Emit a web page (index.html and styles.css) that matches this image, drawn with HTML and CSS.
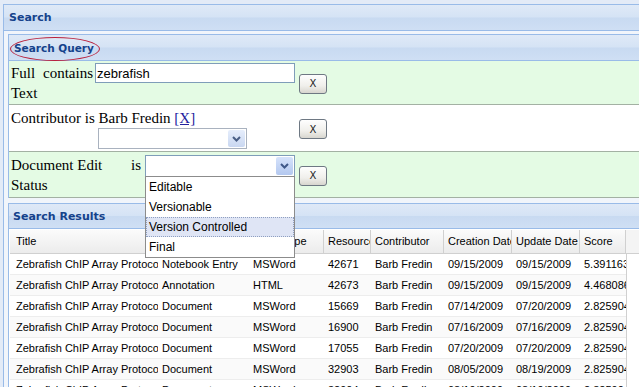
FILE: index.html
```html
<!DOCTYPE html>
<html>

<head>
    <meta charset="UTF-8" />
    <title>Search</title>
    <link rel="stylesheet" href="styles.css">
</head>

<body>
    <div class="panel outer">
        <div class="panel-head">Search</div>
        <div class="outer-body">

            <div class="panel query">
                <div class="panel-head"><span class="mark">Search Query</span></div>

                <div class="crit green">
                    <div class="crit-main r1">
                        <div class="c-label w-full">Full Text</div>
                        <div class="c-op w-contains">contains</div>
                        <input class="textbox" type="text" value="zebrafish">
                    </div>
                    <button class="xbtn">X</button>
                </div>

                <div class="crit white">
                    <div class="crit-main r2">
                        <div class="c-line">Contributor is Barb Fredin <a href="#">[X]</a></div>
                        <div class="combo w-contrib">
                            <div class="combo-text"></div>
                            <div class="combo-arrow">
                                <svg width="9" height="6" viewBox="0 0 9 6"><path d="M1 1 L4.5 4.5 L8 1" fill="none" stroke="#4a5f86" stroke-width="2"/></svg>
                            </div>
                        </div>
                    </div>
                    <button class="xbtn">X</button>
                </div>

                <div class="crit green last">
                    <div class="crit-main r3">
                        <div class="c-label w-doc">Document Edit Status</div>
                        <div class="c-op w-is">is</div>
                        <div class="combo focus w-status">
                            <div class="combo-text"></div>
                            <div class="combo-arrow">
                                <svg width="9" height="6" viewBox="0 0 9 6"><path d="M1 1 L4.5 4.5 L8 1" fill="none" stroke="#3f5888" stroke-width="2"/></svg>
                            </div>
                            <div class="menu">
                                <div class="opt">Editable</div>
                                <div class="opt">Versionable</div>
                                <div class="opt hl">Version Controlled</div>
                                <div class="opt">Final</div>
                            </div>
                        </div>
                    </div>
                    <button class="xbtn">X</button>
                </div>
            </div>

            <div class="panel results">
                <div class="panel-head">Search Results</div>
                <div class="grid">
                    <div class="grid-row grid-head">
                        <div class="cell first">Title</div>
                        <div class="cell">Document Type</div>
                        <div class="cell">Mime Type</div>
                        <div class="cell">Resource ID</div>
                        <div class="cell">Contributor</div>
                        <div class="cell">Creation Date</div>
                        <div class="cell">Update Date</div>
                        <div class="cell">Score</div>
                        <div class="filler"></div>
                    </div>
                    <div id="rows"></div>
                </div>
            </div>

        </div>
    </div>

    <script>
        var results = [
            ["Notebook Entry", "MSWord", "42671", "09/15/2009", "09/15/2009", "5.391163"],
            ["Annotation", "HTML", "42673", "09/15/2009", "09/15/2009", "4.468086"],
            ["Document", "MSWord", "15669", "07/14/2009", "07/20/2009", "2.825904"],
            ["Document", "MSWord", "16900", "07/16/2009", "07/16/2009", "2.825904"],
            ["Document", "MSWord", "17055", "07/20/2009", "07/20/2009", "2.825904"],
            ["Document", "MSWord", "32903", "08/05/2009", "08/19/2009", "2.825904"],
            ["Document", "MSWord", "32904", "08/19/2009", "08/19/2009", "2.825904"]
        ];

        var rows = document.getElementById("rows");

        for (var i = 0; i < results.length; i++) {
            var r = results[i];
            var div = document.createElement("div");
            div.className = "grid-row" + (i % 2 == 1 ? " alt" : "");
            div.innerHTML = `<div class="cell first">Zebrafish ChIP Array Protocol</div>
                <div class="cell">${r[0]}</div>
                <div class="cell">${r[1]}</div>
                <div class="cell">${r[2]}</div>
                <div class="cell">Barb Fredin</div>
                <div class="cell">${r[3]}</div>
                <div class="cell">${r[4]}</div>
                <div class="cell">${r[5]}</div>
                <div class="filler"></div>`;
            rows.appendChild(div);
        }
    </script>
</body>

</html>
```

FILE: styles.css
```css
* {
    box-sizing: border-box;
    margin: 0;
    padding: 0;
}

html,
body {
    height: 100%;
    overflow: hidden;
}

body {
    background: #e3ebf7;
    font-family: "Liberation Sans", Arial, sans-serif;
    font-size: 11px;
    color: #000;
}

.panel {
    border: 1px solid #99bbe8;
    border-right: none;
}

.panel-head {
    height: 26px;
    display: flex;
    align-items: center;
    padding-left: 5px;
    border-bottom: 1px solid #99bbe8;
    background: linear-gradient(#dfe9f7, #d5e3f5 48%, #c8daf1 52%, #cfdff4);
    font-family: "DejaVu Sans", Tahoma, sans-serif;
    font-weight: bold;
    font-size: 11px;
    color: #15428b;
}

.outer {
    margin: 4px 0 0 3px;
    height: 400px;
}

.outer-body {
    background: #f1f5fb;
    padding: 3px 0 0 4px;
    height: 100%;
}

/* query criteria */

.query {
    background: #fff;
    border-bottom: none;
}

.mark {
    position: relative;
    font-size: 10.5px;
}

.mark::before {
    content: "";
    position: absolute;
    left: -4px;
    right: -6px;
    top: 50%;
    height: 22px;
    margin-top: -11px;
    border: 1.5px solid #b9213d;
    border-radius: 50%;
}

.crit {
    display: flex;
    align-items: center;
    padding-left: 2px;
    border-bottom: 1px solid #a3b1a3;
    font-family: "Liberation Serif", "Times New Roman", serif;
    font-size: 15px;
    line-height: 20px;
}

.crit.green {
    background: #e4fbe4;
    height: 44px;
}

.crit.white {
    background: #fff;
    height: 47px;
}

.crit.last {
    height: 46px;
}

.crit-main {
    width: 288px;
    align-self: flex-start;
    display: flex;
}

.r1 {
    margin-top: 2px;
}

.r2 {
    flex-direction: column;
    margin-top: 4px;
}

.r3 {
    margin-top: 3px;
}

.w-full {
    width: 32px;
}

.w-contains {
    width: 52px;
}

.w-doc {
    width: 120px;
}

.w-is {
    width: 14px;
}

.c-line {
    line-height: 19px;
}

.c-line a {
    color: #22229e;
}

.textbox {
    width: 200px;
    height: 20px;
    border: 1px solid #7f9db9;
    padding: 0 1px;
    font-family: "Liberation Sans", Arial, sans-serif;
    font-size: 13px;
    color: #000;
    background: #fff;
}

.combo {
    position: relative;
    display: flex;
    height: 21px;
    border: 1px solid #a9b2bf;
    background: #fff;
}

.combo-text {
    flex: 1;
}

.combo-arrow {
    width: 17px;
    margin: 1px;
    border-radius: 2px;
    background: linear-gradient(#e6eefc, #c9d7f1);
    display: flex;
    align-items: center;
    justify-content: center;
}

.w-contrib {
    width: 149px;
    margin-left: 87px;
}

.w-status {
    width: 150px;
    height: 22px;
}

.combo.focus {
    border-color: #7f9db9;
}

.combo.focus .combo-arrow {
    background: linear-gradient(#d6e3fb, #b3c8ef);
}

.menu {
    position: absolute;
    top: 100%;
    left: -1px;
    width: 150px;
    border: 1px solid #8c8c8c;
    background: #fff;
    z-index: 5;
}

.opt {
    height: 20px;
    line-height: 20px;
    padding-left: 3px;
    font-family: "Liberation Sans", Arial, sans-serif;
    font-size: 12px;
}

.opt.hl {
    background: #dfe5f5;
    outline: 1px dotted #8f9fc0;
    outline-offset: -1px;
}

.xbtn {
    width: 28px;
    height: 20px;
    margin-top: 2px;
    border: 1px solid #6e7883;
    border-radius: 3px;
    background: linear-gradient(#fefefe, #f0efeb 60%, #d8d6cf);
    font-family: "DejaVu Sans", Tahoma, sans-serif;
    font-size: 10px;
    color: #222;
}

/* results grid */

.results {
    margin-top: 5px;
    background: #fff;
    height: 300px;
}

.results .panel-head {
    height: 25px;
    padding-left: 4px;
}

.grid {
    margin-left: 1px;
    padding-top: 1px;
}

.grid-row {
    display: grid;
    grid-template-columns: 148px 91px 75px 47px 73px 68px 68px 46px 1fr;
    height: 21px;
}

.grid-row.alt {
    background: #fafafa;
}

.cell {
    padding-left: 4px;
    white-space: nowrap;
    overflow: hidden;
    line-height: 20px;
    border-bottom: 1px solid #ededed;
}

.cell.first {
    padding-left: 6px;
}

.filler {
    border-left: 1px solid #d0d0d0;
    background: #fff;
}

.grid-head {
    height: 24px;
    background: linear-gradient(#fbfbfb, #f3f3f3 50%, #ebebeb);
}

.grid-head .cell {
    line-height: 23px;
    border-right: 1px solid #d0d0d0;
    border-bottom: 1px solid #d0d0d0;
}

.grid-head .filler {
    border-left: none;
    border-bottom: 1px solid #d0d0d0;
    background: #f4f4f4;
}
```
